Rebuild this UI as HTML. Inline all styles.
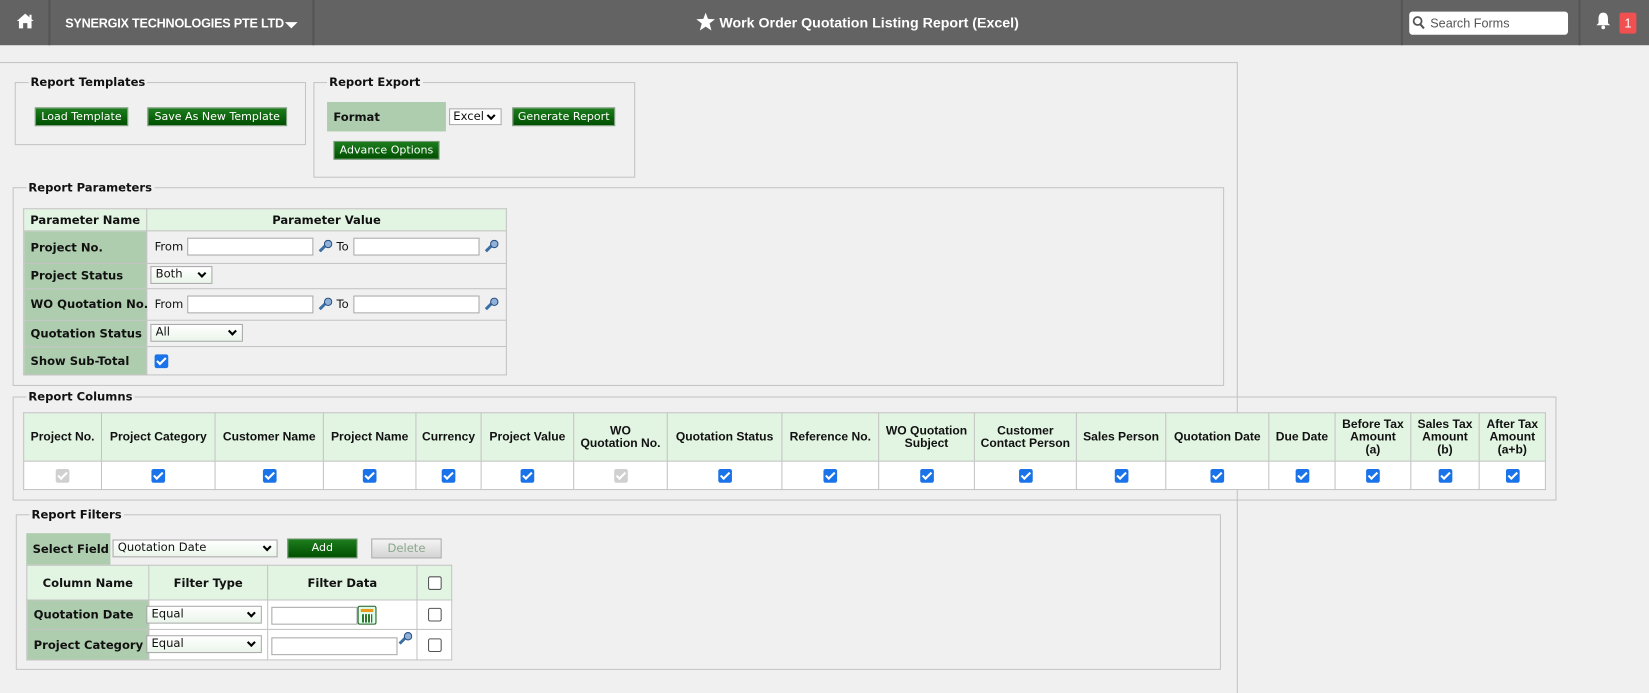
<!DOCTYPE html>
<html><head><meta charset="utf-8">
<style>
*{box-sizing:border-box}
html,body{margin:0;width:1649px;height:685px;overflow:hidden;background:#f0f0f0}
#w{position:absolute;left:0;top:0;width:1568px;height:652px;transform:scale(1.05166);transform-origin:0 0;font-family:"DejaVu Sans","Liberation Sans",sans-serif;font-size:11px;color:#111}
.a{position:absolute}
.hdr{left:0;top:0;width:1568px;height:43px;background:#636363;color:#fff}
.sep{top:0;width:2px;height:43px;background:#555}
fieldset{position:absolute;border:1px solid #c4c4c4;margin:0;padding:0}
legend{font-weight:bold;font-size:11px;padding:0 2px;margin-left:12px;color:#111}
.btn{position:absolute;height:18px;background:linear-gradient(#1d7d1d,#004f00);border:1px solid #7a9a7a;color:#fff;font-family:"DejaVu Sans",sans-serif;font-size:10.5px;text-align:center;line-height:16px}
.lab{position:absolute;background:#aecdae;font-weight:bold;font-size:11px;padding-left:6px;display:flex;align-items:center;white-space:nowrap}
.sel{position:absolute;border:1px solid #aaa;font-size:11px;padding-left:4px;line-height:14px;background:linear-gradient(#fff,#eaf5ea)}
.sel:after{content:"";position:absolute;right:6px;top:3px;width:4px;height:4px;border-right:2px solid #000;border-bottom:2px solid #000;transform:rotate(45deg)}
.inp{position:absolute;background:#fff;border:1px solid #aaa;height:17px}
table{border-collapse:collapse;position:absolute}
td,th{border:1px solid #c4c4c4;padding:0;white-space:nowrap}
th{background:#e2f4e2;font-weight:bold}
.cb{display:inline-block;width:13px;height:13px;border-radius:2px;background:#1a73e8;position:relative;vertical-align:middle}
.cb:after{content:"";position:absolute;left:4px;top:1px;width:3px;height:7px;border-right:2px solid #fff;border-bottom:2px solid #fff;transform:rotate(45deg)}
.cb.d{background:#d0d0d0}
.cb.e{background:#fff;border:1px solid #555}
.cb.e:after{display:none}
.mag{position:absolute;width:14px;height:12px}
.cols th{font-family:"Liberation Sans",sans-serif;font-size:11.5px;line-height:12px}
.tl{background:#aecdae;font-weight:bold;padding-left:6px;text-align:left}
</style></head><body><div id="w">
<div class="a hdr">
 <svg class="a" style="left:15px;top:12px" width="18" height="16" viewBox="0 0 18 16"><path d="M9 1 L1 8 L3 8 L3 15 L7 15 L7 10 L11 10 L11 15 L15 15 L15 8 L17 8 Z" fill="#fff"/><rect x="13" y="2" width="2" height="4" fill="#fff"/></svg>
 <div class="a sep" style="left:46px"></div>
 <div class="a" style="left:62px;top:15px;font-family:'Liberation Sans',sans-serif;font-weight:bold;font-size:12px;letter-spacing:-0.2px">SYNERGIX TECHNOLOGIES PTE LTD</div>
 <div class="a" style="left:271px;top:21px;width:0;height:0;border-left:6px solid transparent;border-right:6px solid transparent;border-top:6px solid #fff"></div>
 <div class="a sep" style="left:297px"></div>
 <svg class="a" style="left:662px;top:12px" width="18" height="17" viewBox="0 0 24 23"><path d="M12 0 L15 8 L24 8.5 L17 14 L19.5 23 L12 18 L4.5 23 L7 14 L0 8.5 L9 8 Z" fill="#fff"/></svg>
 <div class="a" style="left:684px;top:14px;font-family:'Liberation Sans',sans-serif;font-weight:bold;font-size:13.5px">Work Order Quotation Listing Report (Excel)</div>
 <div class="a sep" style="left:1332px"></div>
 <div class="a" style="left:1340px;top:11px;width:151px;height:22px;background:#fff;border-radius:3px;color:#555;font-family:'Liberation Sans',sans-serif;font-size:12px;line-height:22px;padding-left:20px">Search Forms</div>
 <svg class="a" style="left:1343px;top:15px" width="12" height="13" viewBox="0 0 12 13"><circle cx="5" cy="5" r="3.8" fill="none" stroke="#555" stroke-width="1.7"/><path d="M7.5 8 L11 12" stroke="#555" stroke-width="2"/></svg>
 <div class="a sep" style="left:1501px"></div>
 <svg class="a" style="left:1517px;top:11px" width="15" height="17" viewBox="0 0 15 17"><path d="M7.5 1 C4 1 3 4 3 7 L3 11 L1 13 L14 13 L12 11 L12 7 C12 4 11 1 7.5 1Z" fill="#fff"/><circle cx="7.5" cy="15" r="1.8" fill="#fff"/></svg>
 <div class="a" style="left:1540px;top:12px;width:16px;height:20px;background:#f05050;border-radius:2px;color:#fff;font-family:'Liberation Sans',sans-serif;font-size:12px;text-align:center;line-height:20px">1</div>
</div>
<div class="a" style="left:0;top:59px;width:1177px;height:1px;background:#c4c4c4"></div>
<div class="a" style="left:1176px;top:59px;width:1px;height:600px;background:#c4c4c4"></div>

<fieldset style="left:14px;top:72px;width:277px;height:66px"><legend>Report Templates</legend></fieldset>
<div class="btn" style="left:33px;top:102px;width:89px">Load Template</div>
<div class="btn" style="left:140px;top:102px;width:133px">Save As New Template</div>

<fieldset style="left:298px;top:72px;width:306px;height:97px"><legend>Report Export</legend></fieldset>
<div class="lab" style="left:311px;top:97px;width:113px;height:28px">Format</div>
<div class="sel" style="left:427px;top:103px;width:50px;height:16px;padding-left:3px;background:#fff">Excel</div>
<div class="btn" style="left:487px;top:102px;width:98px">Generate Report</div>
<div class="btn" style="left:317px;top:134px;width:101px">Advance Options</div>

<fieldset style="left:12px;top:172px;width:1152px;height:195px"><legend>Report Parameters</legend></fieldset>
<table style="left:22px;top:198px;width:460px;table-layout:fixed">
<tr style="height:21px"><th style="width:117px">Parameter Name</th><th>Parameter Value</th></tr>
<tr style="height:31px"><td class="tl">Project No.</td><td></td></tr>
<tr style="height:24px"><td class="tl">Project Status</td><td></td></tr>
<tr style="height:30px"><td class="tl">WO Quotation No.</td><td></td></tr>
<tr style="height:25px"><td class="tl">Quotation Status</td><td></td></tr>
<tr style="height:27px"><td class="tl">Show Sub-Total</td><td></td></tr>
</table>
<div class="a" style="left:147px;top:228px">From</div><div class="inp" style="left:178px;top:226px;width:120px"></div>
<div class="a" style="left:320px;top:228px">To</div><div class="inp" style="left:336px;top:226px;width:120px"></div>
<div class="a" style="left:147px;top:283px">From</div><div class="inp" style="left:178px;top:281px;width:120px"></div>
<div class="a" style="left:320px;top:283px">To</div><div class="inp" style="left:336px;top:281px;width:120px"></div>
<svg class="mag" style="left:302px;top:228px" viewBox="0 0 14 12"><path d="M1 10 L7 4 L9 6 L3 12Z" fill="#3a6ea5"/><circle cx="10" cy="4" r="3.5" fill="#8fb0d8" stroke="#2a5080"/></svg>
<svg class="mag" style="left:460px;top:228px" viewBox="0 0 14 12"><path d="M1 10 L7 4 L9 6 L3 12Z" fill="#3a6ea5"/><circle cx="10" cy="4" r="3.5" fill="#8fb0d8" stroke="#2a5080"/></svg>
<svg class="mag" style="left:302px;top:283px" viewBox="0 0 14 12"><path d="M1 10 L7 4 L9 6 L3 12Z" fill="#3a6ea5"/><circle cx="10" cy="4" r="3.5" fill="#8fb0d8" stroke="#2a5080"/></svg>
<svg class="mag" style="left:460px;top:283px" viewBox="0 0 14 12"><path d="M1 10 L7 4 L9 6 L3 12Z" fill="#3a6ea5"/><circle cx="10" cy="4" r="3.5" fill="#8fb0d8" stroke="#2a5080"/></svg>
<div class="sel" style="left:143px;top:253px;width:59px;height:17px">Both</div>
<div class="sel" style="left:143px;top:308px;width:88px;height:17px">All</div>
<div class="a" style="left:147px;top:336px"><span class="cb"></span></div>

<fieldset style="left:12px;top:371px;width:1468px;height:105px"><legend>Report Columns</legend></fieldset>
<table class="cols" style="left:22px;top:392px;width:1448px;text-align:center;table-layout:fixed">
<tr style="height:46px"><th style="width:74px">Project No.</th><th style="width:108px">Project Category</th><th style="width:103px">Customer Name</th><th style="width:88px">Project Name</th><th style="width:62px">Currency</th><th style="width:88px">Project Value</th><th style="width:89px">WO<br>Quotation No.</th><th style="width:109px">Quotation Status</th><th style="width:92px">Reference No.</th><th style="width:91px">WO Quotation<br>Subject</th><th style="width:97px">Customer<br>Contact Person</th><th style="width:85px">Sales Person</th><th style="width:98px">Quotation Date</th><th style="width:63px">Due Date</th><th style="width:72px">Before Tax<br>Amount<br>(a)</th><th style="width:65px">Sales Tax<br>Amount<br>(b)</th><th>After Tax<br>Amount<br>(a+b)</th></tr>
<tr style="height:27px;background:#fff"><td><span class="cb d"></span></td><td><span class="cb"></span></td><td><span class="cb"></span></td><td><span class="cb"></span></td><td><span class="cb"></span></td><td><span class="cb"></span></td><td><span class="cb d"></span></td><td><span class="cb"></span></td><td><span class="cb"></span></td><td><span class="cb"></span></td><td><span class="cb"></span></td><td><span class="cb"></span></td><td><span class="cb"></span></td><td><span class="cb"></span></td><td><span class="cb"></span></td><td><span class="cb"></span></td><td><span class="cb"></span></td></tr>
</table>

<fieldset style="left:15px;top:483px;width:1146px;height:154px"><legend>Report Filters</legend></fieldset>
<div class="lab" style="left:25px;top:507px;width:80px;height:30px">Select Field</div>
<div class="sel" style="left:107px;top:513px;width:157px;height:17px">Quotation Date</div>
<div class="btn" style="left:273px;top:512px;width:67px;height:19px">Add</div>
<div class="a" style="left:353px;top:512px;width:67px;height:19px;background:linear-gradient(#f4f4f4,#d4d4d4);border:1px solid #aaa;color:#8aa88a;text-align:center;line-height:17px;font-size:11px">Delete</div>
<table style="left:25px;top:537px;width:405px;text-align:center;table-layout:fixed">
<tr style="height:33px"><th style="width:116px">Column Name</th><th style="width:113px">Filter Type</th><th style="width:142px">Filter Data</th><th><span class="cb e"></span></th></tr>
<tr style="height:28px;background:#fff"><td class="tl">Quotation Date</td><td></td><td></td><td><span class="cb e"></span></td></tr>
<tr style="height:29px;background:#fff"><td class="tl">Project Category</td><td></td><td></td><td><span class="cb e"></span></td></tr>
</table>
<div class="sel" style="left:139px;top:576px;width:110px;height:17px">Equal</div>
<div class="sel" style="left:139px;top:604px;width:110px;height:17px">Equal</div>
<div class="inp" style="left:258px;top:577px;width:82px"></div>
<div class="a" style="left:340px;top:576px;width:18px;height:18px;border:1px solid #1a5a1a;background:#dfe;border-radius:2px"><div style="margin:2px;height:3px;background:#e89a20"></div><div style="margin:0 3px;height:8px;background:repeating-linear-gradient(90deg,#2a7a2a 0 2px,#fff 2px 3px)"></div></div>
<div class="inp" style="left:258px;top:606px;width:120px"></div>
<svg class="mag" style="left:378px;top:601px" viewBox="0 0 14 12"><path d="M1 10 L7 4 L9 6 L3 12Z" fill="#3a6ea5"/><circle cx="10" cy="4" r="3.5" fill="#8fb0d8" stroke="#2a5080"/></svg>
</div></body></html>
